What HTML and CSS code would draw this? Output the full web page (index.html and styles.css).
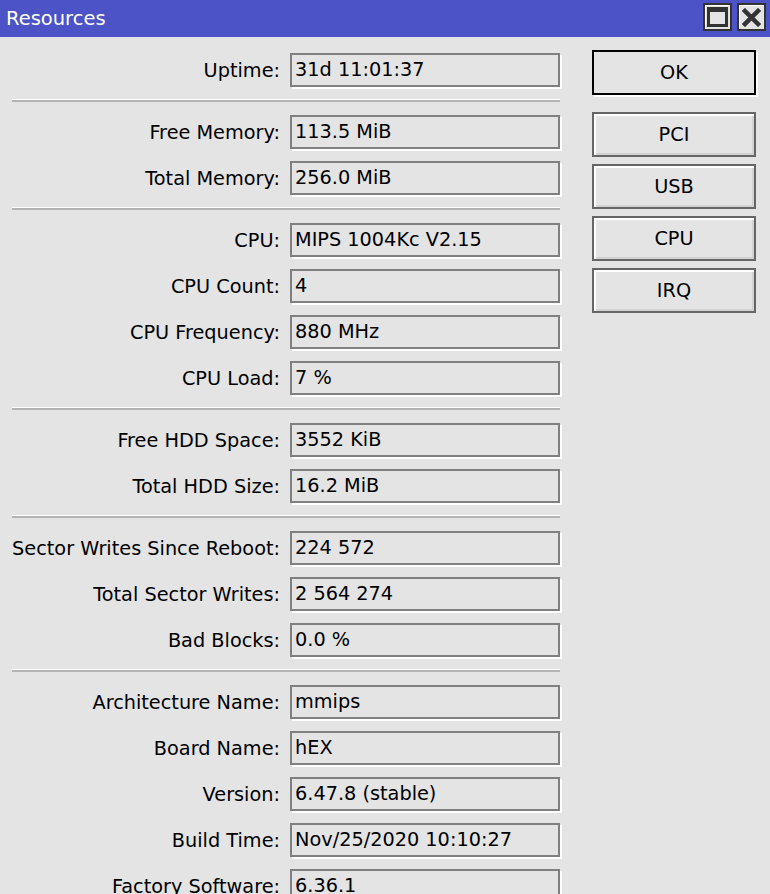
FILE: index.html
```html
<!DOCTYPE html>
<html lang="en">
<head>
    <meta charset="UTF-8">
    <meta name="viewport" content="width=device-width, initial-scale=1.0">
    <title>Resources</title>
    <link rel="stylesheet" href="styles.css">
</head>
<body>
<div class="window">
    <div class="titlebar">
        <span class="title">Resources</span>
        <div class="title-buttons">
            <span class="tbtn">
                <svg width="21" height="20" viewBox="0 0 21 20"><rect x="1.5" y="1.5" width="18" height="17" fill="#e4e4e4" stroke="#333" stroke-width="3"/><rect x="1" y="1" width="19" height="4" fill="#333"/></svg>
            </span>
            <span class="tbtn">
                <svg width="19" height="19" viewBox="0 0 19 19"><path d="M3 3 L16 16 M16 3 L3 16" stroke="#333" stroke-width="4.5" stroke-linecap="square"/></svg>
            </span>
        </div>
    </div>

    <div class="content">
        <div class="fields">
            <div class="row"><span class="label">Uptime:</span><div class="field">31d 11:01:37</div></div>
            <div class="sep"></div>
            <div class="row"><span class="label">Free Memory:</span><div class="field">113.5 MiB</div></div>
            <div class="row"><span class="label">Total Memory:</span><div class="field">256.0 MiB</div></div>
            <div class="sep"></div>
            <div class="row"><span class="label">CPU:</span><div class="field">MIPS 1004Kc V2.15</div></div>
            <div class="row"><span class="label">CPU Count:</span><div class="field">4</div></div>
            <div class="row"><span class="label">CPU Frequency:</span><div class="field">880 MHz</div></div>
            <div class="row"><span class="label">CPU Load:</span><div class="field">7 %</div></div>
            <div class="sep"></div>
            <div class="row"><span class="label">Free HDD Space:</span><div class="field">3552 KiB</div></div>
            <div class="row"><span class="label">Total HDD Size:</span><div class="field">16.2 MiB</div></div>
            <div class="sep"></div>
            <div class="row"><span class="label">Sector Writes Since Reboot:</span><div class="field">224 572</div></div>
            <div class="row"><span class="label">Total Sector Writes:</span><div class="field">2 564 274</div></div>
            <div class="row"><span class="label">Bad Blocks:</span><div class="field">0.0 %</div></div>
            <div class="sep"></div>
            <div class="row"><span class="label">Architecture Name:</span><div class="field">mmips</div></div>
            <div class="row"><span class="label">Board Name:</span><div class="field">hEX</div></div>
            <div class="row"><span class="label">Version:</span><div class="field">6.47.8 (stable)</div></div>
            <div class="row"><span class="label">Build Time:</span><div class="field">Nov/25/2020 10:10:27</div></div>
            <div class="row"><span class="label">Factory Software:</span><div class="field">6.36.1</div></div>
        </div>

        <div class="buttons">
            <div class="btn btn-default">OK</div>
            <div class="btn">PCI</div>
            <div class="btn">USB</div>
            <div class="btn">CPU</div>
            <div class="btn">IRQ</div>
        </div>
    </div>
</div>
</body>
</html>
```

FILE: styles.css
```css
*{
    margin: 0;
    padding: 0;
    box-sizing: border-box;
}
body{
    background-color: #e4e4e4;
    font-family: "DejaVu Sans", "Liberation Sans", sans-serif;
    font-size: 19.3px;
    color: #000;
    overflow: hidden;
}
.window{
    width: 770px;
    height: 894px;
}
.titlebar{
    height: 37px;
    background: #4b53c6;
    display: flex;
    align-items: center;
    justify-content: space-between;
    padding-left: 6px;
}
.title{
    color: #fff;
    font-size: 19.5px;
}
.title-buttons{
    display: flex;
    gap: 5px;
    padding-right: 4px;
    padding-bottom: 3px;
}
.tbtn{
    width: 29px;
    height: 28px;
    background: #e4e4e4;
    border: 2px solid #333;
    box-shadow: inset 1px 1px 0 #fff;
    display: flex;
    align-items: center;
    justify-content: center;
}
.content{
    display: flex;
    padding-top: 10px;
}
.fields{
    width: 561px;
}
.row{
    height: 46px;
    display: grid;
    grid-template-columns: 280px 270px;
    column-gap: 10px;
    align-items: center;
}
.label{
    text-align: right;
    white-space: nowrap;
}
.field{
    height: 34px;
    border: 2px solid #808080;
    box-shadow: 2px 2px 0 #fff;
    padding-left: 3px;
    line-height: 30px;
    white-space: nowrap;
    overflow: hidden;
}
.sep{
    margin: 6px 0 7px 12px;
    width: 548px;
    border-top: 1px solid #fff;
    border-bottom: 2px solid #b4b4b4;
}
.buttons{
    margin-left: 31px;
    padding-top: 3px;
    display: flex;
    flex-direction: column;
    gap: 7px;
    width: 164px;
}
.btn{
    height: 45px;
    border: 2px solid #666;
    box-shadow: inset 2px 2px 0 #fff, inset -2px -2px 0 #d2d2d2;
    text-align: center;
    line-height: 41px;
}
.btn-default{
    border-color: #000;
    box-shadow: 2px 2px 0 #fff;
    margin-bottom: 10px;
}
```
